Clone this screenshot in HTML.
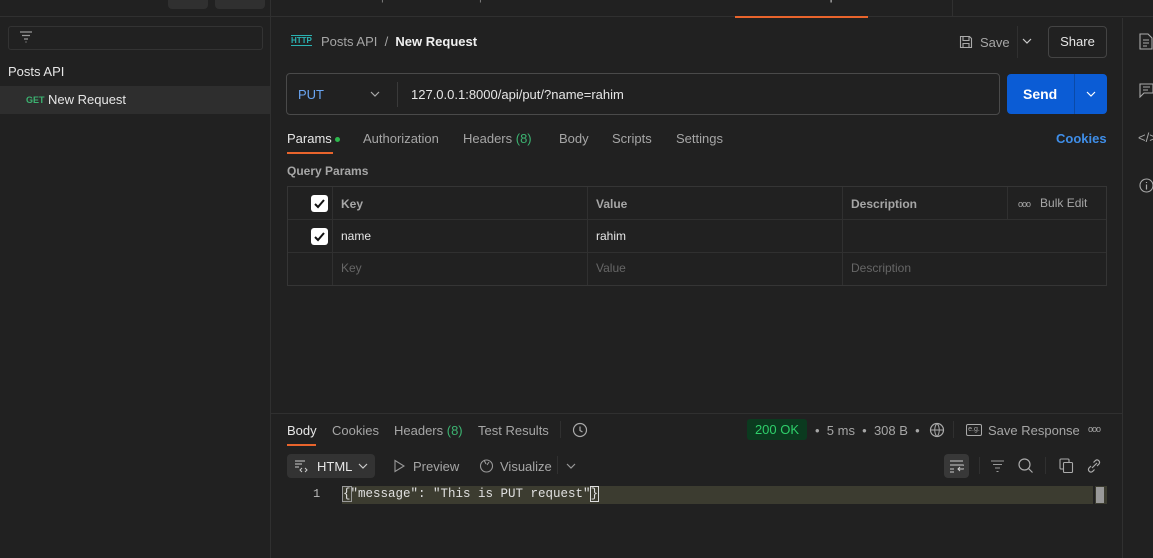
<!DOCTYPE html><html><head><style>
*{box-sizing:border-box;margin:0;padding:0}
body{width:1153px;height:558px;background:#212121;font-family:"Liberation Sans",sans-serif;color:#e6e6e6;position:relative;overflow:hidden;font-size:13px}
.a{position:absolute}
.g{color:#a6a6a6}
.line{background:#303030}
</style></head><body>
<div class="a" style="left:0;top:0;width:1153px;height:17px;background:#212121;border-bottom:1px solid #303030"></div>
<div class="a" style="left:168px;top:-8px;width:40px;height:17px;background:#303030;border-radius:4px"></div>
<div class="a" style="left:215px;top:-8px;width:50px;height:17px;background:#303030;border-radius:4px"></div>
<div class="a g" style="left:290px;top:-11px;font-size:12px;color:#777">GET Untitled Request</div>
<div class="a" style="left:430px;top:-11px;font-size:12px;color:#777">POST http://localhost:8</div>
<div class="a" style="left:620px;top:-11px;font-size:12px;color:#777">Posts API</div>
<div class="a" style="left:756px;top:-11px;font-size:12px;color:#ccc">PUT New Request</div>
<div class="a" style="left:735px;top:16px;width:133px;height:2px;background:#e8642c"></div>
<div class="a" style="left:990px;top:-11px;font-size:12px;color:#777">No environment</div>
<div class="a line" style="left:270px;top:0;width:1px;height:558px"></div>
<div class="a line" style="left:1122px;top:18px;width:1px;height:540px"></div>
<div class="a line" style="left:952px;top:0;width:1px;height:17px"></div>
<div class="a" style="left:8px;top:26px;width:255px;height:24px;border:1px solid #333;border-radius:3px"></div>
<svg class="a" style="left:19px;top:31px" width="14" height="12"><path d="M1 1h12M3 4.5h8M5 8h4M6.5 11h1" stroke="#999" stroke-width="1.2"/></svg>
<div class="a" style="left:8px;top:64px;font-size:13px">Posts API</div>
<div class="a" style="left:0;top:86px;width:270px;height:28px;background:#2e2e2e"></div>
<div class="a" style="left:26px;top:95px;font-size:9px;font-weight:bold;color:#3cb371">GET</div>
<div class="a" style="left:48px;top:92px;font-size:13px">New Request</div>
<div class="a" style="left:291px;top:35px;font-size:8px;color:#2ab3b3;font-weight:bold;border-top:1px solid #2ab3b3;border-bottom:1px solid #2ab3b3;line-height:9px">HTTP</div>
<div class="a g" style="left:321px;top:34px;font-size:13px">Posts API &nbsp;/&nbsp; <span style="color:#f0f0f0;font-weight:bold">New Request</span></div>
<svg class="a" style="left:959px;top:35px" width="14" height="14"><path d="M1.5 1.5h9l2 2v9h-11z M4 1.5v4h6v-4 M4 12.5v-4h6v4" fill="none" stroke="#aaa" stroke-width="1.1"/></svg>
<div class="a g" style="left:980px;top:35px">Save</div>
<div class="a line" style="left:1017px;top:26px;width:1px;height:32px"></div>
<svg class="a" style="left:1022px;top:38px" width="10" height="6"><path d="M1 1l4 4 4-4" fill="none" stroke="#ccc" stroke-width="1.2"/></svg>
<div class="a" style="left:1048px;top:26px;width:59px;height:32px;border:1px solid #444;border-radius:4px;text-align:center;line-height:30px">Share</div>
<div class="a" style="left:286px;top:73px;width:714px;height:42px;border:1px solid #4a4a4a;border-radius:4px"></div>
<div class="a" style="left:298px;top:87px;color:#6aa5f2;font-size:13px">PUT</div>
<svg class="a" style="left:370px;top:91px" width="10" height="6"><path d="M1 1l4 4 4-4" fill="none" stroke="#aaa" stroke-width="1.2"/></svg>
<div class="a" style="left:397px;top:82px;width:1px;height:25px;background:#3a3a3a"></div>
<div class="a" style="left:411px;top:87px;font-size:13px">127.0.0.1:8000/api/put/?name=rahim</div>
<div class="a" style="left:1007px;top:74px;width:100px;height:40px;background:#0b5cd5;border-radius:4px"></div>
<div class="a" style="left:1074px;top:74px;width:1px;height:40px;background:#0a4aa8"></div>
<div class="a" style="left:1023px;top:86px;font-size:14px;font-weight:bold;color:#fff">Send</div>
<svg class="a" style="left:1086px;top:91px" width="10" height="6"><path d="M1 1l4 4 4-4" fill="none" stroke="#fff" stroke-width="1.2"/></svg>
<div class="a" style="left:287px;top:131px">Params <span style="display:inline-block;width:5px;height:5px;border-radius:50%;background:#2db84d;vertical-align:middle"></span></div>
<div class="a" style="left:287px;top:152px;width:46px;height:2px;background:#e8642c"></div>
<div class="a g" style="left:363px;top:131px">Authorization</div>
<div class="a g" style="left:463px;top:131px">Headers <span style="color:#3cb371">(8)</span></div>
<div class="a g" style="left:559px;top:131px">Body</div>
<div class="a g" style="left:612px;top:131px">Scripts</div>
<div class="a g" style="left:676px;top:131px">Settings</div>
<div class="a" style="left:1056px;top:131px;color:#3f8ee8;font-weight:bold">Cookies</div>
<div class="a g" style="left:287px;top:164px;font-size:12px;font-weight:bold">Query Params</div>
<div class="a" style="left:287px;top:186px;width:820px;height:100px;border:1px solid #353535"></div>
<div class="a line" style="left:288px;top:219px;width:818px;height:1px"></div>
<div class="a line" style="left:288px;top:252px;width:818px;height:1px"></div>
<div class="a line" style="left:332px;top:187px;width:1px;height:98px"></div>
<div class="a line" style="left:587px;top:187px;width:1px;height:98px"></div>
<div class="a line" style="left:842px;top:187px;width:1px;height:98px"></div>
<div class="a line" style="left:1007px;top:187px;width:1px;height:32px"></div>
<div class="a" style="left:311px;top:195px;width:17px;height:17px;background:#fff;border-radius:3px"></div>
<svg class="a" style="left:311px;top:195px" width="17" height="17"><path d="M4 9l3 3 6-7" fill="none" stroke="#111" stroke-width="2"/></svg>
<div class="a" style="left:311px;top:228px;width:17px;height:17px;background:#fff;border-radius:3px"></div>
<svg class="a" style="left:311px;top:228px" width="17" height="17"><path d="M4 9l3 3 6-7" fill="none" stroke="#111" stroke-width="2"/></svg>
<div class="a g" style="left:341px;top:197px;font-weight:bold;font-size:12px">Key</div>
<div class="a g" style="left:596px;top:197px;font-weight:bold;font-size:12px">Value</div>
<div class="a g" style="left:851px;top:197px;font-weight:bold;font-size:12px">Description</div>
<div class="a g" style="left:1018px;top:196px;font-size:12px"><span style="font-size:9px;letter-spacing:-1px">ooo</span>&nbsp;&nbsp; Bulk Edit</div>
<div class="a" style="left:341px;top:229px;font-size:12px">name</div>
<div class="a" style="left:596px;top:229px;font-size:12px">rahim</div>
<div class="a" style="left:341px;top:261px;font-size:12px;color:#666">Key</div>
<div class="a" style="left:596px;top:261px;font-size:12px;color:#666">Value</div>
<div class="a" style="left:851px;top:261px;font-size:12px;color:#666">Description</div>
<div class="a line" style="left:271px;top:413px;width:851px;height:1px"></div>
<div class="a" style="left:287px;top:423px">Body</div>
<div class="a" style="left:287px;top:444px;width:29px;height:2px;background:#e8642c"></div>
<div class="a g" style="left:332px;top:423px">Cookies</div>
<div class="a g" style="left:394px;top:423px">Headers <span style="color:#3cb371">(8)</span></div>
<div class="a g" style="left:478px;top:423px">Test Results</div>
<div class="a line" style="left:560px;top:421px;width:1px;height:17px"></div>
<svg class="a" style="left:572px;top:422px" width="16" height="16"><circle cx="8" cy="8" r="6.5" fill="none" stroke="#aaa" stroke-width="1.2"/><path d="M8 4.5v4l2.5 1.5" fill="none" stroke="#aaa" stroke-width="1.2"/></svg>
<div class="a" style="left:747px;top:419px;width:60px;height:21px;background:#0b3a1f;border-radius:3px;color:#2ecf6a;text-align:center;line-height:21px">200 OK</div>
<div class="a g" style="left:815px;top:423px">• &nbsp;5 ms &nbsp;•&nbsp; 308 B &nbsp;•</div>
<svg class="a" style="left:929px;top:422px" width="16" height="16"><circle cx="8" cy="8" r="6.5" fill="none" stroke="#aaa" stroke-width="1.2"/><path d="M1.5 8h13M8 1.5c-3 3-3 10 0 13M8 1.5c3 3 3 10 0 13" fill="none" stroke="#aaa" stroke-width="1"/></svg>
<div class="a line" style="left:953px;top:421px;width:1px;height:17px"></div>
<div class="a" style="left:966px;top:424px;width:16px;height:12px;border:1px solid #aaa;border-radius:2px;font-size:7px;color:#aaa;text-align:center;line-height:10px">e.g.</div>
<div class="a g" style="left:988px;top:423px">Save Response</div>
<div class="a g" style="left:1088px;top:424px;font-size:9px;letter-spacing:-1px">ooo</div>
<div class="a" style="left:287px;top:454px;width:88px;height:24px;background:#333;border-radius:4px"></div>
<svg class="a" style="left:294px;top:459px" width="14" height="14"><path d="M1 2h10M1 5h7M1 8h4M8 9l-2 2 2 2M11 9l2 2-2 2" fill="none" stroke="#ccc" stroke-width="1"/></svg>
<div class="a" style="left:317px;top:459px">HTML</div>
<svg class="a" style="left:358px;top:463px" width="10" height="6"><path d="M1 1l4 4 4-4" fill="none" stroke="#ccc" stroke-width="1.2"/></svg>
<svg class="a" style="left:393px;top:459px" width="12" height="14"><path d="M2 1.5l9 5.5-9 5.5z" fill="none" stroke="#999" stroke-width="1.1"/></svg>
<div class="a g" style="left:413px;top:459px">Preview</div>
<svg class="a" style="left:478px;top:457px" width="17" height="17"><circle cx="8.5" cy="9" r="6" fill="none" stroke="#999" stroke-width="1.1"/><path d="M6 3l2 4M11 5l-2 3" stroke="#999" stroke-width="1.1"/></svg>
<div class="a g" style="left:500px;top:459px">Visualize</div>
<div class="a line" style="left:557px;top:456px;width:1px;height:18px"></div>
<svg class="a" style="left:566px;top:463px" width="10" height="6"><path d="M1 1l4 4 4-4" fill="none" stroke="#999" stroke-width="1.2"/></svg>
<div class="a" style="left:944px;top:454px;width:25px;height:24px;background:#383838;border-radius:4px"></div>
<svg class="a" style="left:949px;top:459px" width="15" height="14"><path d="M1 2h13M1 6h13a2 2 0 010 4H9M11 8l-2 2 2 2M1 10h4M1 13h4" fill="none" stroke="#ccc" stroke-width="1"/></svg>
<div class="a line" style="left:979px;top:457px;width:1px;height:17px"></div>
<svg class="a" style="left:990px;top:459px" width="15" height="14"><path d="M1 2h13M3 5.5h9M5 9h5M6.5 12.5h2" stroke="#999" stroke-width="1.1"/></svg>
<svg class="a" style="left:1017px;top:457px" width="17" height="17"><circle cx="7.5" cy="7.5" r="5.5" fill="none" stroke="#aaa" stroke-width="1.2"/><path d="M11.5 11.5l4 4" stroke="#aaa" stroke-width="1.2"/></svg>
<div class="a line" style="left:1045px;top:457px;width:1px;height:17px"></div>
<svg class="a" style="left:1059px;top:458px" width="15" height="16"><rect x="1" y="1" width="9" height="10" rx="1" fill="none" stroke="#aaa" stroke-width="1.1"/><rect x="4.5" y="4.5" width="9" height="10" rx="1" fill="#212121" stroke="#aaa" stroke-width="1.1"/></svg>
<svg class="a" style="left:1086px;top:458px" width="16" height="16"><path d="M6 10l5-5M5 8l-2 2a2.5 2.5 0 003.5 3.5l2-2M11 8l2-2a2.5 2.5 0 00-3.5-3.5l-2 2" fill="none" stroke="#aaa" stroke-width="1.2"/></svg>
<div class="a" style="left:313px;top:487px;font-family:'Liberation Mono',monospace;font-size:12px;color:#bbb">1</div>
<div class="a" style="left:342px;top:486px;width:751px;height:18px;background:#3c3c30"></div>
<div class="a" style="left:1095px;top:486px;width:12px;height:18px;background:#3c3c30"></div>
<div class="a" style="left:1096px;top:487px;width:8px;height:16px;background:#999"></div>
<div class="a" style="left:343px;top:487px;font-family:'Liberation Mono',monospace;font-size:12.5px;color:#e0e0e0;white-space:pre"><span style="outline:1px solid #999">{</span>"message": "This is PUT request"<span style="outline:1px solid #ddd">}</span></div>
<svg class="a" style="left:1139px;top:33px" width="14" height="17"><path d="M1 1h8l4 4v11H1z M4 7h6M4 10h6M4 13h4" fill="none" stroke="#aaa" stroke-width="1.1"/></svg>
<svg class="a" style="left:1139px;top:83px" width="14" height="15"><path d="M1 1h13v9H5l-4 4z M4 4h7M4 7h5" fill="none" stroke="#aaa" stroke-width="1.1"/></svg>
<div class="a g" style="left:1138px;top:130px;font-size:13px">&lt;/&gt;</div>
<svg class="a" style="left:1139px;top:178px" width="15" height="15"><circle cx="7.5" cy="7.5" r="6.5" fill="none" stroke="#aaa" stroke-width="1.1"/><path d="M7.5 6.5v5M7.5 4v1" stroke="#aaa" stroke-width="1.2"/></svg>
</body></html>
